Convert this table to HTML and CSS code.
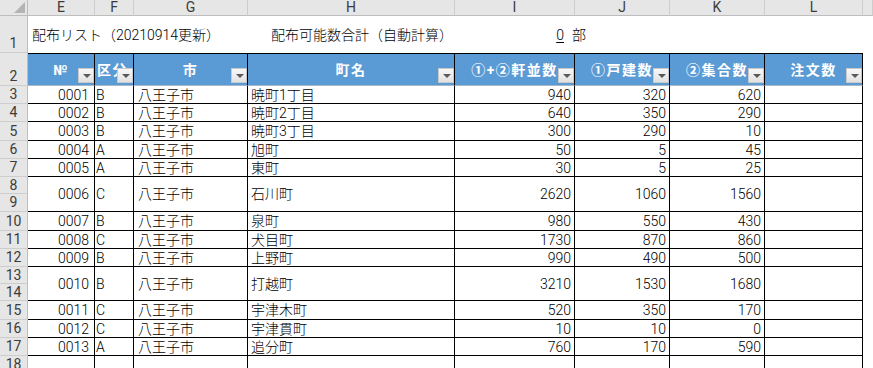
FILE: index.html
```html
<!DOCTYPE html>
<html lang="ja">
<head>
<meta charset="utf-8">
<link rel="stylesheet" href="styles.css">
</head>
<body>
<div class="sheet">
  <!-- column letters -->
  <div class="ch corner"><span class="tri"></span></div>
  <div class="ch">E</div><div class="ch">F</div><div class="ch">G</div><div class="ch">H</div>
  <div class="ch">I</div><div class="ch">J</div><div class="ch">K</div><div class="ch">L</div><div class="ch"></div>

  <!-- row 1 -->
  <div class="rh bottom">1</div>
  <div class="title span3">配布リスト（20210914更新）</div>
  <div class="title sum">配布可能数合計（自動計算）</div>
  <div class="title zero"><u>0</u></div>
  <div class="title bu">部</div>
  <div class="blank"></div><div class="blank"></div><div class="blank"></div>

  <!-- row 2 -->
  <div class="rh bottom">2</div>
  <div class="th">№<span class="dd"></span></div>
  <div class="th left">区分<span class="dd"></span></div>
  <div class="th">市<span class="dd"></span></div>
  <div class="th">町名<span class="dd"></span></div>
  <div class="th">①+②軒並数<span class="dd"></span></div>
  <div class="th">①戸建数<span class="dd"></span></div>
  <div class="th">②集合数<span class="dd"></span></div>
  <div class="th">注文数<span class="dd"></span></div>
  <div class="blank"></div>

  <div class="rh">3</div><div class="td num no">0001</div><div class="td">B</div><div class="td city">八王子市</div><div class="td town">暁町1丁目</div><div class="td num">940</div><div class="td num">320</div><div class="td num">620</div><div class="td"></div><div class="blank"></div>
  <div class="rh">4</div><div class="td num no">0002</div><div class="td">B</div><div class="td city">八王子市</div><div class="td town">暁町2丁目</div><div class="td num">640</div><div class="td num">350</div><div class="td num">290</div><div class="td"></div><div class="blank"></div>
  <div class="rh">5</div><div class="td num no">0003</div><div class="td">B</div><div class="td city">八王子市</div><div class="td town">暁町3丁目</div><div class="td num">300</div><div class="td num">290</div><div class="td num">10</div><div class="td"></div><div class="blank"></div>
  <div class="rh">6</div><div class="td num no">0004</div><div class="td">A</div><div class="td city">八王子市</div><div class="td town">旭町</div><div class="td num">50</div><div class="td num">5</div><div class="td num">45</div><div class="td"></div><div class="blank"></div>
  <div class="rh">7</div><div class="td num no">0005</div><div class="td">A</div><div class="td city">八王子市</div><div class="td town">東町</div><div class="td num">30</div><div class="td num">5</div><div class="td num">25</div><div class="td"></div><div class="blank"></div>
  <div class="rh">8</div><div class="td num no s2">0006</div><div class="td s2">C</div><div class="td city s2">八王子市</div><div class="td town s2">石川町</div><div class="td num s2">2620</div><div class="td num s2">1060</div><div class="td num s2">1560</div><div class="td s2"></div><div class="blank s2"></div>
  <div class="rh">9</div>
  <div class="rh">10</div><div class="td num no">0007</div><div class="td">B</div><div class="td city">八王子市</div><div class="td town">泉町</div><div class="td num">980</div><div class="td num">550</div><div class="td num">430</div><div class="td"></div><div class="blank"></div>
  <div class="rh">11</div><div class="td num no">0008</div><div class="td">C</div><div class="td city">八王子市</div><div class="td town">犬目町</div><div class="td num">1730</div><div class="td num">870</div><div class="td num">860</div><div class="td"></div><div class="blank"></div>
  <div class="rh">12</div><div class="td num no">0009</div><div class="td">B</div><div class="td city">八王子市</div><div class="td town">上野町</div><div class="td num">990</div><div class="td num">490</div><div class="td num">500</div><div class="td"></div><div class="blank"></div>
  <div class="rh">13</div><div class="td num no s2">0010</div><div class="td s2">B</div><div class="td city s2">八王子市</div><div class="td town s2">打越町</div><div class="td num s2">3210</div><div class="td num s2">1530</div><div class="td num s2">1680</div><div class="td s2"></div><div class="blank s2"></div>
  <div class="rh">14</div>
  <div class="rh">15</div><div class="td num no">0011</div><div class="td">C</div><div class="td city">八王子市</div><div class="td town">宇津木町</div><div class="td num">520</div><div class="td num">350</div><div class="td num">170</div><div class="td"></div><div class="blank"></div>
  <div class="rh">16</div><div class="td num no">0012</div><div class="td">C</div><div class="td city">八王子市</div><div class="td town">宇津貫町</div><div class="td num">10</div><div class="td num">10</div><div class="td num">0</div><div class="td"></div><div class="blank"></div>
  <div class="rh">17</div><div class="td num no">0013</div><div class="td">A</div><div class="td city">八王子市</div><div class="td town">追分町</div><div class="td num">760</div><div class="td num">170</div><div class="td num">590</div><div class="td"></div><div class="blank"></div>
  <div class="rh">18</div><div class="td s2"></div><div class="td s2"></div><div class="td s2"></div><div class="td s2"></div><div class="td s2"></div><div class="td s2"></div><div class="td s2"></div><div class="td s2"></div><div class="blank s2"></div>
  <div class="rh">19</div>
</div>
</body>
</html>
```
FILE: styles.css
```css
html, body {
  margin: 0;
  padding: 0;
  background: #ffffff;
  overflow: hidden;
}

.sheet {
  display: grid;
  grid-template-columns: 28px 67px 39px 114px 207px 120px 95px 95px 98px 1fr;
  grid-template-rows: 16px 37px 33px 18px 18px 19px 18px 18px 17px 18px 19px 18px 18px 17px 17px 19px 18px 18px 18px 18px;
  width: 873px;
  height: 368px;
  overflow: hidden;
  font-family: "Roboto", "Noto Sans CJK JP", sans-serif;
  font-size: 14px;
  line-height: 16px;
  color: #000;
}

.sheet > div {
  box-sizing: border-box;
  min-width: 0;
}

/* column letters */
.ch {
  background: #e6e6e6;
  border-right: 1px solid #cdcdcd;
  border-bottom: 1px solid #bdbdbd;
  color: #3c3c3c;
  font-size: 14px;
  line-height: 15px;
  text-align: center;
}

.corner {
  position: relative;
  border-right: 1px solid #bdbdbd;
}

.tri {
  position: absolute;
  right: 2px;
  bottom: 2px;
  width: 0;
  height: 0;
  border-left: 11px solid transparent;
  border-bottom: 11px solid #b4b4b4;
}

/* row numbers */
.rh {
  background: #e6e6e6;
  border-right: 1px solid #bdbdbd;
  border-bottom: 1px solid #cdcdcd;
  color: #3c3c3c;
  font-size: 14px;
  line-height: 15px;
  display: flex;
  align-items: center;
  justify-content: center;
}

.rh.bottom {
  align-items: flex-end;
  padding-bottom: 1px;
}

/* row 1 */
.title {
  display: flex;
  align-items: center;
  padding-top: 1px;
  white-space: nowrap;
  overflow: visible;
  font-weight: 300;
}

.span3 {
  grid-column: span 3;
  padding-left: 4px;
}

.sum {
  padding-left: 23px;
}

.zero {
  justify-content: flex-end;
  padding-right: 11px;
}

.zero u {
  text-underline-offset: 2px;
}

.bu {
  margin-left: -3px;
}

/* header row */
.th {
  position: relative;
  background: #5b9bd5;
  color: #ffffff;
  font-weight: bold;
  letter-spacing: 1.5px;
  border-top: 1px solid #000;
  border-right: 1px solid #000;
  border-bottom: 1px solid #a9b8c8;
  display: flex;
  align-items: center;
  justify-content: center;
  white-space: nowrap;
  overflow: hidden;
}

.th.left {
  justify-content: flex-start;
  padding-left: 2px;
}

.dd {
  position: absolute;
  right: 0;
  bottom: 2px;
  width: 16px;
  height: 15px;
  box-sizing: border-box;
  background: linear-gradient(#f7f7f7, #e2e2e2);
  border: 1px solid #c9c9c9;
}

.dd::after {
  content: "";
  position: absolute;
  left: 4px;
  top: 5px;
  border-left: 4px solid transparent;
  border-right: 4px solid transparent;
  border-top: 4px solid #595959;
}

/* data cells */
.td {
  border-right: 1px solid #000;
  border-bottom: 1px solid #000;
  display: flex;
  align-items: center;
  padding-left: 1px;
  white-space: nowrap;
  overflow: hidden;
  font-weight: 300;
}

.td.num {
  justify-content: flex-end;
  padding-right: 3px;
}

.td.no {
  padding-right: 5px;
}

.td.city {
  padding-left: 4px;
}

.td.town {
  padding-left: 3px;
}

.s2 {
  grid-row: span 2;
}

.blank {
  background: #ffffff;
}
```
